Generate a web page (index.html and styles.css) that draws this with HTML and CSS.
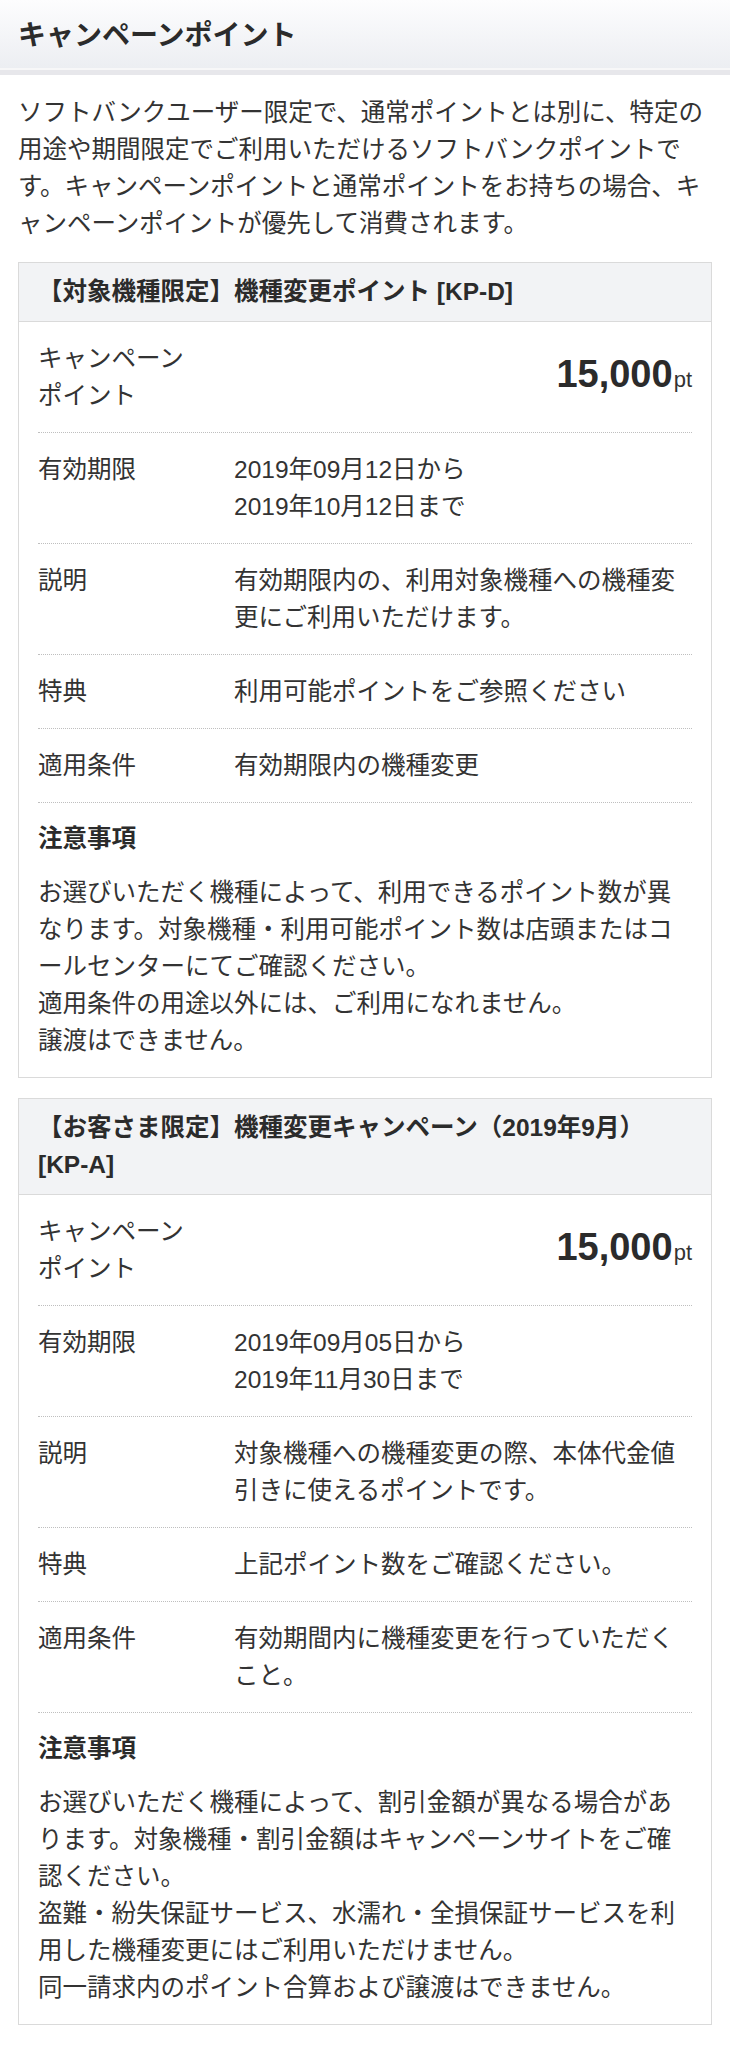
FILE: index.html
```html
<!DOCTYPE html>
<html lang="ja">
<head>
<meta charset="utf-8">
<title>キャンペーンポイント</title>
<link rel="stylesheet" href="styles.css">
</head>
<body>
<header class="page-head">
  <h1 class="page-title">キャンペーンポイント</h1>
</header>
<main class="page">
  <p class="intro">ソフトバンクユーザー限定で、通常ポイントとは別に、特定の用途や期間限定でご利用いただけるソフトバンクポイントです。キャンペーンポイントと通常ポイントをお持ちの場合、キャンペーンポイントが優先して消費されます。</p>

  <section class="card">
    <h2 class="card-head">【対象機種限定】機種変更ポイント [KP-D]</h2>
    <div class="card-body">
      <div class="row">
        <div class="label">キャンペーン<br>ポイント</div>
        <div class="value points"><span class="num">15,000</span><span class="unit">pt</span></div>
      </div>
      <div class="row">
        <div class="label">有効期限</div>
        <div class="value">2019年09月12日から<br>2019年10月12日まで</div>
      </div>
      <div class="row">
        <div class="label">説明</div>
        <div class="value">有効期限内の、利用対象機種への機種変更にご利用いただけます。</div>
      </div>
      <div class="row">
        <div class="label">特典</div>
        <div class="value">利用可能ポイントをご参照ください</div>
      </div>
      <div class="row">
        <div class="label">適用条件</div>
        <div class="value">有効期限内の機種変更</div>
      </div>
      <div class="notes">
        <h3 class="notes-title">注意事項</h3>
        <p class="notes-text">お選びいただく機種によって、利用できるポイント数が異なります。対象機種・利用可能ポイント数は店頭またはコールセンターにてご確認ください。<br>適用条件の用途以外には、ご利用になれません。<br>譲渡はできません。</p>
      </div>
    </div>
  </section>

  <section class="card">
    <h2 class="card-head">【お客さま限定】機種変更キャンペーン（2019年9月） [KP-A]</h2>
    <div class="card-body">
      <div class="row">
        <div class="label">キャンペーン<br>ポイント</div>
        <div class="value points"><span class="num">15,000</span><span class="unit">pt</span></div>
      </div>
      <div class="row">
        <div class="label">有効期限</div>
        <div class="value">2019年09月05日から<br>2019年11月30日まで</div>
      </div>
      <div class="row">
        <div class="label">説明</div>
        <div class="value">対象機種への機種変更の際、本体代金値引きに使えるポイントです。</div>
      </div>
      <div class="row">
        <div class="label">特典</div>
        <div class="value">上記ポイント数をご確認ください。</div>
      </div>
      <div class="row">
        <div class="label">適用条件</div>
        <div class="value">有効期間内に機種変更を行っていただくこと。</div>
      </div>
      <div class="notes">
        <h3 class="notes-title">注意事項</h3>
        <p class="notes-text">お選びいただく機種によって、割引金額が異なる場合があります。対象機種・割引金額はキャンペーンサイトをご確認ください。<br>盗難・紛失保証サービス、水濡れ・全損保証サービスを利用した機種変更にはご利用いただけません。<br>同一請求内のポイント合算および譲渡はできません。</p>
      </div>
    </div>
  </section>
</main>
</body>
</html>
```

FILE: styles.css
```css
html, body {
  margin: 0;
  padding: 0;
  background: #fff;
}

body {
  font-family: "Liberation Sans", "Noto Sans CJK JP", sans-serif;
  font-size: 24.5px;
  line-height: 37px;
  color: #333;
}

.page-head {
  height: 70px;
  display: flex;
  align-items: center;
  padding: 3px 18px 0;
  box-sizing: border-box;
  background: linear-gradient(#fdfdfe, #eceef2);
  border-bottom: 2px solid #f7f7f8;
  box-shadow: 0 5px 0 #e7e7eb;
}

.page-title {
  margin: 0;
  font-size: 28px;
  line-height: 37px;
  font-weight: bold;
  color: #2b2b2b;
}

.page {
  padding: 0 18px 20px;
}

.intro {
  margin: 24px 0 0;
}

.card {
  margin-top: 20px;
  border: 1px solid #dadada;
  background: #fff;
}

.card-head {
  margin: 0;
  padding: 10px 19px 11px;
  background: #f2f3f5;
  border-bottom: 1px solid #dadada;
  font-size: 24.5px;
  line-height: 37px;
  font-weight: bold;
  color: #2b2b2b;
}

.card-body {
  padding: 0 19px;
}

.row {
  display: flex;
  padding: 18px 0;
  border-bottom: 1px dotted #bfbfbf;
}

.label {
  flex: 0 0 196px;
}

.value {
  flex: 1 1 auto;
  min-width: 0;
}

.points {
  align-self: center;
  text-align: right;
  line-height: 44px;
}

.num {
  font-size: 38px;
  font-weight: bold;
  color: #2b2b2b;
}

.unit {
  font-size: 22px;
  margin-left: 1px;
}

.notes {
  padding: 17px 0 18px;
}

.notes-title {
  margin: 0 0 17px;
  font-size: 24.5px;
  line-height: 37px;
  font-weight: bold;
  color: #2b2b2b;
}

.notes-text {
  margin: 0;
}
```
